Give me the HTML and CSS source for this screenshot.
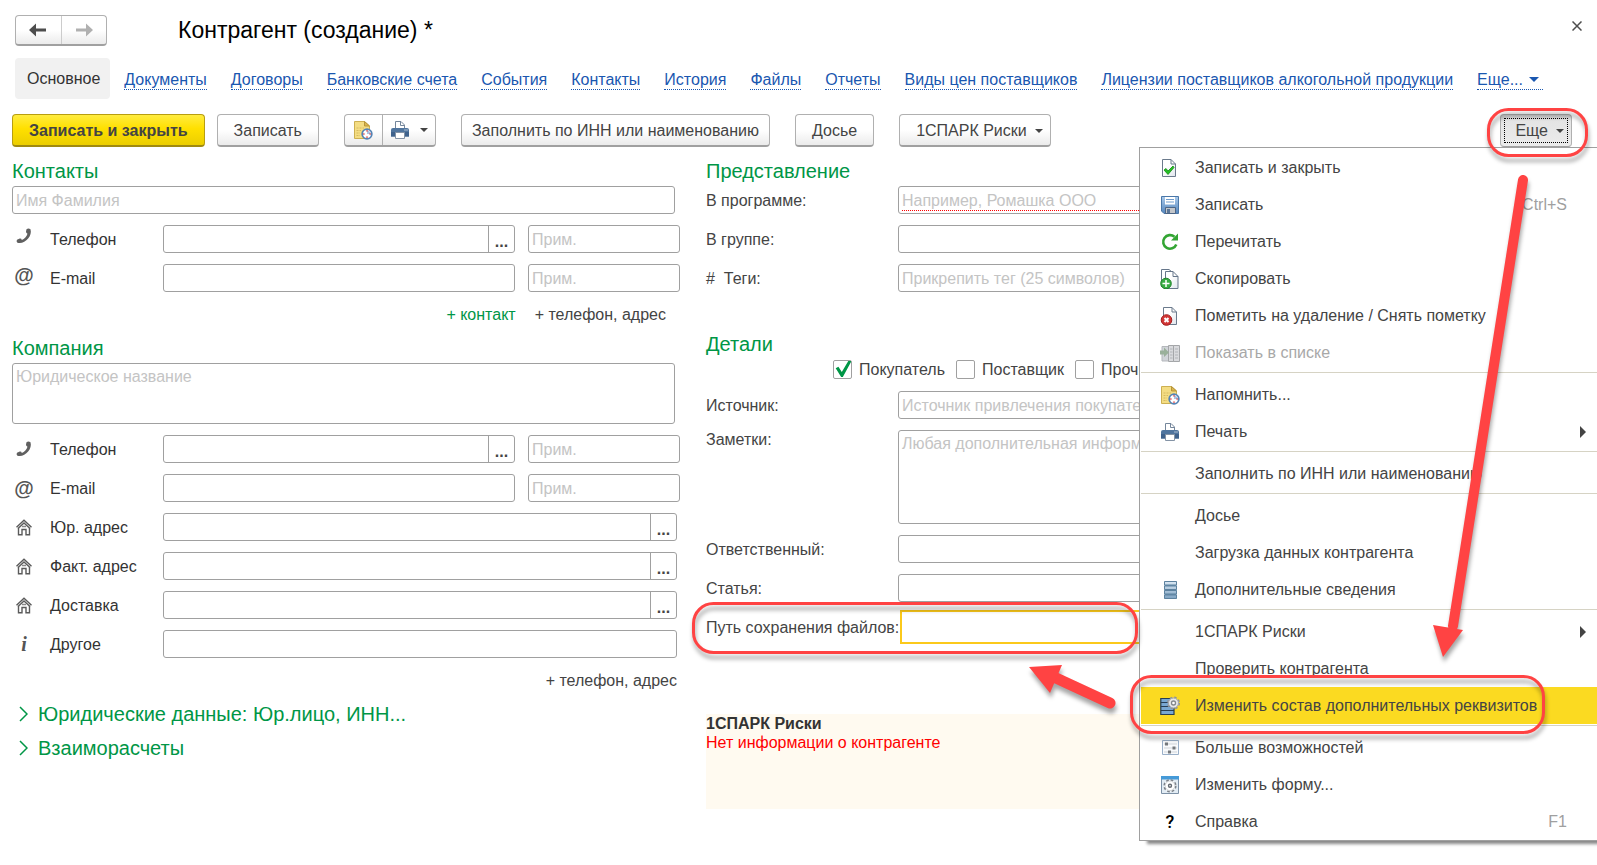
FILE: index.html
```html
<!DOCTYPE html>
<html lang="ru">
<head>
<meta charset="utf-8">
<title>Контрагент (создание)</title>
<link rel="stylesheet" href="styles.css">
</head>
<body>
<svg class="sprite" aria-hidden="true">
  <defs>
    <linearGradient id="g-blue" x1="0" y1="0" x2="0" y2="1"><stop offset="0" stop-color="#a9c9ea"/><stop offset="1" stop-color="#5586bd"/></linearGradient>
    <linearGradient id="g-bar" x1="0" y1="0" x2="0" y2="1"><stop offset="0" stop-color="#dbe8f4"/><stop offset="1" stop-color="#7fa3c2"/></linearGradient>
    <linearGradient id="g-page" x1="0" y1="0" x2="1" y2="1"><stop offset="0.4" stop-color="#ffffff"/><stop offset="1" stop-color="#dfe5ec"/></linearGradient>
  </defs>
  <symbol id="i-note" viewBox="0 0 20 20">
    <path d="M1.500 1.500H11.500L16.500 6V18.500H1.500Z" fill="#f4dd83" stroke="#cdb052"/>
    <path d="M11.500 1.500V6H16.500Z" fill="#d9b64f" stroke="#b8953a"/>
    <path d="M3.500 8H11M3.500 10.500H8M3.500 13H7M3.500 15.500H7" stroke="#d6bb60" stroke-dasharray="2 1"/>
    <circle cx="14" cy="14" r="4.800" fill="#fff" stroke="#5583b4" stroke-width="1.800"/>
    <path d="M14 14V10.500A3.500 3.500 0 0 1 17.500 14Z" fill="#a9c4e4"/>
    <path d="M14 10.300V11.500M14 16.500V17.700M10.300 14H11.500M16.500 14H17.700" stroke="#d33" stroke-width="1.500"/>
  </symbol>
  <symbol id="i-print" viewBox="0 0 20 20">
    <path d="M5.500 9V1.500H11L14.500 5V9" fill="#fff" stroke="#74869b"/>
    <path d="M10.500 1.500V5.500H14.500" fill="none" stroke="#74869b"/>
    <path d="M3 8H17Q19 8 19 10V16.500H1V10Q1 8 3 8Z" fill="#50759e"/>
    <path d="M1 12H19V16.500H1Z" fill="#3f628c"/>
    <path d="M14.500 10H15.500M16.500 10H17.500" stroke="#fff"/>
    <path d="M5.500 12.500H14.500V18.500H5.500Z" fill="#fff" stroke="#8493a5"/>
  </symbol>
  <symbol id="i-page-ok" viewBox="0 0 20 20">
    <path d="M2.500 1.500H11L15.500 6V18.500H2.500Z" fill="url(#g-page)" stroke="#6b7a8c"/>
    <path d="M11 1.500V6H15.500" fill="none" stroke="#6b7a8c"/>
    <path d="M4 12L6 10.500L8 13L13 8L14 9.500L8 16.500Z" fill="#24c024" stroke="#128a12" stroke-width=".8"/>
  </symbol>
  <symbol id="i-save" viewBox="0 0 20 20">
    <path d="M1.500 1.500H18.500V18.500H4L1.500 16Z" fill="url(#g-blue)" stroke="#4a77a8"/>
    <path d="M5 2H15V9.500H5Z" fill="#fff"/><path d="M6 4.500H14M6 7H14" stroke="#6e9ccd"/>
    <path d="M5.500 12.500H15.500V18.500H5.500Z" fill="#c3c6ca" stroke="#4c6585"/>
    <path d="M7 14H10V18H7Z" fill="#5a7698"/>
  </symbol>
  <symbol id="i-reload" viewBox="0 0 20 20">
    <path d="M16.300 12.500A6.800 6.800 0 1 1 14.500 4.800" fill="none" stroke="#33a533" stroke-width="2.600"/>
    <path d="M18 1.500V8.500H11Z" fill="#33a533"/>
  </symbol>
  <symbol id="i-copy" viewBox="0 0 20 20">
    <path d="M1.500 18V.5H9L12 3" fill="#fff" stroke="#66768a"/>
    <path d="M5.500 2.500H13L18 7.500V19.500H5.500Z" fill="url(#g-page)" stroke="#66768a"/>
    <path d="M13 2.500V7.500H18" fill="none" stroke="#66768a"/>
    <circle cx="6" cy="14.500" r="5.300" fill="#38ad44" stroke="#21812d"/>
    <path d="M6 11V18M2.500 14.500H9.500" stroke="#fff" stroke-width="1.500"/>
  </symbol>
  <symbol id="i-delete" viewBox="0 0 20 20">
    <path d="M3.500 1.500H12L16.500 6V18.500H3.500Z" fill="url(#g-page)" stroke="#6b7a8c"/>
    <path d="M12 1.500V6H16.500" fill="none" stroke="#6b7a8c"/>
    <circle cx="6.500" cy="14" r="5.300" fill="#d13636" stroke="#a51e1e"/>
    <path d="M4.500 12L8.500 16M8.500 12L4.500 16" stroke="#fff" stroke-width="2"/>
  </symbol>
  <symbol id="i-list" viewBox="0 0 20 20">
    <path d="M2 3.500H8.500V18H2Z" fill="#d1d4d9" stroke="#b4b7bb"/>
    <path d="M8.500 2.500H13.500V18.500H8.500ZM13.500 2.500H19.500V18.500H13.500Z" fill="#d9dadd" stroke="#a4a6a9"/>
    <path d="M10 6H12.500M10 9H12.500M10 12H12.500M10 15H12.500M15 6H18M15 9H18M15 12H18M15 15H18" stroke="#b1b4b8"/>
    <path d="M0 7.500H4V4.500L9 9.500L4 14V11.500H0Z" fill="#9ab09b"/>
  </symbol>
  <symbol id="i-stack" viewBox="0 0 20 20">
    <path d="M4.500 1.500H16.500V18.500H4.500Z" fill="#6e93b2"/>
    <path d="M4.500 1.500H16.500V5H4.500ZM4.500 6H16.500V9.500H4.500ZM4.500 10.500H16.500V14H4.500ZM4.500 15H16.500V18.500H4.500Z" fill="url(#g-bar)" stroke="#5d829f"/>
  </symbol>
  <symbol id="i-attrs" viewBox="0 0 20 20">
    <path d="M.8 2.500H14V18.500H.8Z" fill="#78a8d2" stroke="#263e54" stroke-width="1.200"/>
    <path d="M.8 6.500H14M.8 10.500H14M.8 14.500H14" stroke="#263e54" stroke-width="1.200"/>
    <circle cx="13.500" cy="7" r="5.500" fill="none" stroke="#909498" stroke-width="2" stroke-dasharray="2.400 1.920"/>
    <circle cx="13.500" cy="7" r="5" fill="#e6e7e8" stroke="#a4a7aa"/>
    <circle cx="13.500" cy="7" r="2" fill="#fff" stroke="#83878b" stroke-width="1.300"/>
  </symbol>
  <symbol id="i-sliders" viewBox="0 0 20 20">
    <path d="M2.500 2.500H18.500V16.500H2.500Z" fill="#f8fafc" stroke="#9ab0c9"/>
    <path d="M4 6H17M4 10H17M4 14H17" stroke="#cfd3d8"/>
    <path d="M5 4.500H8V7.500H5ZM12.500 8.500H15.500V11.500H12.500ZM8 12.500H11V15.500H8Z" fill="#74787c"/>
  </symbol>
  <symbol id="i-form" viewBox="0 0 20 20">
    <path d="M1.500 1.500H18.500V18.500H1.500Z" fill="#e2ecf4" stroke="#7d91a6"/>
    <path d="M1 1H19V4.500H1Z" fill="#459ad8"/>
    <circle cx="10" cy="10.800" r="5.800" fill="#fff" stroke="#7b8188" stroke-width="1.600" stroke-dasharray="2.600 1.955"/>
    <circle cx="10" cy="10.800" r="4.800" fill="#fff" stroke="#b4b8bc" stroke-width=".6"/>
    <circle cx="10" cy="10.800" r="1.500" fill="none" stroke="#666c73" stroke-width="1.400"/>
  </symbol>
  <symbol id="i-phone" viewBox="0 0 18 18">
    <path d="M11.500 2.200Q13.500 .8 15.500 2.300C17.800 9.500 9 18 2.400 15.700Q.9 14.300 2 12.700L4.700 11.600Q6.500 11.300 6.800 13C9.500 12 11.700 9.500 12.500 6.800Q10.800 6 11 4.500Z" fill="#606060"/>
  </symbol>
  <symbol id="i-home" viewBox="0 0 18 18">
    <path d="M1.500 9.200L9 2.200L16.500 9.200M3 10.500L9 5L15 10.500" fill="none" stroke="#5b5b5b" stroke-width="1.400"/>
    <path d="M3.500 10V16.800H7V11.500H11V16.800H14.500V10" fill="none" stroke="#5b5b5b" stroke-width="1.400"/>
    <path d="M7 8.500H11" stroke="#8a8a8a" stroke-width="1.500"/>
  </symbol>
</svg>

<main class="page">
  <header class="header">
    <div class="group nav">
      <button class="nav-btn" type="button" aria-label="Назад"><svg width="18" height="14" viewBox="0 0 18 14"><path d="M0 7L7 .5V5.500H17V8.500H7V13.500Z" fill="#4d4d4d"/></svg></button>
      <button class="nav-btn" type="button" aria-label="Вперед"><svg width="18" height="14" viewBox="0 0 18 14"><path d="M18 7L11 .5V5.500H1V8.500H11V13.500Z" fill="#b0b0b0"/></svg></button>
    </div>
    <h1 class="title">Контрагент (создание) *</h1>
    <button class="close" type="button" aria-label="Закрыть"><svg width="10" height="10" viewBox="0 0 10 10"><path d="M.5 .5L9.500 9.500M9.500 .5L.5 9.500" stroke="#4d4d4d" stroke-width="1.500"/></svg></button>
  </header>

  <nav class="tabs">
    <span class="tab-active">Основное</span>
    <a class="tab" href="#">Документы</a>
    <a class="tab" href="#">Договоры</a>
    <a class="tab" href="#">Банковские счета</a>
    <a class="tab" href="#">События</a>
    <a class="tab" href="#">Контакты</a>
    <a class="tab" href="#">История</a>
    <a class="tab" href="#">Файлы</a>
    <a class="tab" href="#">Отчеты</a>
    <a class="tab" href="#">Виды цен поставщиков</a>
    <a class="tab" href="#">Лицензии поставщиков алкогольной продукции</a>
    <a class="tab tab-more" href="#">Еще...<svg width="10" height="5" viewBox="0 0 10 5"><path d="M0 0H10L5 5Z" fill="#1a57b0"/></svg></a>
  </nav>

  <div class="toolbar">
    <button class="btn btn-primary" type="button">Записать и закрыть</button>
    <button class="btn" type="button">Записать</button>
    <div class="group icons">
      <button class="icon-btn" type="button" aria-label="Напомнить"><svg class="icon"><use href="#i-note"/></svg></button>
      <button class="icon-btn icon-btn-wide" type="button" aria-label="Печать"><svg class="icon"><use href="#i-print"/></svg><span class="caret"></span></button>
    </div>
    <button class="btn btn-fill spaced" type="button">Заполнить по ИНН или наименованию</button>
    <button class="btn spaced" type="button">Досье</button>
    <button class="btn btn-drop spaced" type="button">1СПАРК Риски<span class="caret"></span></button>
    <button class="btn btn-more" type="button"><span class="focus-box">Еще<span class="caret"></span></span></button>
  </div>

  <form class="columns">
    <div class="col-left">
      <h2 class="section">Контакты</h2>
      <input class="field full" type="text" placeholder="Имя Фамилия" aria-label="Имя Фамилия">
      <div class="row raised">
        <span class="mark"><svg class="glyph"><use href="#i-phone"/></svg></span>
        <label class="label" for="c-phone">Телефон</label>
        <div class="combo"><input id="c-phone" type="text"><button type="button" class="dots">...</button></div>
        <input class="field note" type="text" placeholder="Прим." aria-label="Примечание к телефону">
      </div>
      <div class="row raised">
        <span class="mark at">@</span>
        <label class="label" for="c-mail">E-mail</label>
        <input class="field" id="c-mail" type="text">
        <input class="field note" type="text" placeholder="Прим." aria-label="Примечание к почте">
      </div>
      <div class="adders adders-wide"><a class="add add-green" href="#">+ контакт</a><a class="add" href="#">+ телефон, адрес</a></div>

      <h2 class="section">Компания</h2>
      <textarea class="field area-name full" placeholder="Юридическое название" aria-label="Юридическое название"></textarea>
      <div class="row">
        <span class="mark"><svg class="glyph"><use href="#i-phone"/></svg></span>
        <label class="label" for="k-phone">Телефон</label>
        <div class="combo"><input id="k-phone" type="text"><button type="button" class="dots">...</button></div>
        <input class="field note" type="text" placeholder="Прим." aria-label="Примечание к телефону компании">
      </div>
      <div class="row">
        <span class="mark at">@</span>
        <label class="label" for="k-mail">E-mail</label>
        <input class="field" id="k-mail" type="text">
        <input class="field note" type="text" placeholder="Прим." aria-label="Примечание к почте компании">
      </div>
      <div class="row row-wide">
        <span class="mark"><svg class="glyph"><use href="#i-home"/></svg></span>
        <label class="label" for="k-legal">Юр. адрес</label>
        <div class="combo"><input id="k-legal" type="text"><button type="button" class="dots">...</button></div>
      </div>
      <div class="row row-wide">
        <span class="mark"><svg class="glyph"><use href="#i-home"/></svg></span>
        <label class="label" for="k-fact">Факт. адрес</label>
        <div class="combo"><input id="k-fact" type="text"><button type="button" class="dots">...</button></div>
      </div>
      <div class="row row-wide">
        <span class="mark"><svg class="glyph"><use href="#i-home"/></svg></span>
        <label class="label" for="k-ship">Доставка</label>
        <div class="combo"><input id="k-ship" type="text"><button type="button" class="dots">...</button></div>
      </div>
      <div class="row row-wide">
        <span class="mark info">i</span>
        <label class="label" for="k-other">Другое</label>
        <input class="field" id="k-other" type="text">
      </div>
      <div class="adders"><a class="add" href="#">+ телефон, адрес</a></div>

      <button class="expander" type="button"><svg width="9" height="16" viewBox="0 0 9 16"><path d="M1 1L8 8L1 15" fill="none" stroke="#009646" stroke-width="1.500"/></svg>Юридические данные: Юр.лицо, ИНН...</button>
      <button class="expander" type="button"><svg width="9" height="16" viewBox="0 0 9 16"><path d="M1 1L8 8L1 15" fill="none" stroke="#009646" stroke-width="1.500"/></svg>Взаиморасчеты</button>
    </div>

    <div class="col-right">
      <h2 class="section">Представление</h2>
      <div class="prop"><label for="p-name">В программе:</label><input class="field required" id="p-name" type="text" placeholder="Например, Ромашка ООО"></div>
      <div class="prop"><label for="p-group">В группе:</label><input class="field" id="p-group" type="text"></div>
      <div class="prop"><label for="p-tags">#&nbsp; Теги:</label><input class="field" id="p-tags" type="text" placeholder="Прикрепить тег (25 символов)"></div>

      <h2 class="section section-details">Детали</h2>
      <div class="checks">
        <label class="check"><input type="checkbox" checked>Покупатель</label>
        <label class="check"><input type="checkbox">Поставщик</label>
        <label class="check"><input type="checkbox">Прочие</label>
      </div>
      <div class="prop"><label for="p-source">Источник:</label><input class="field" id="p-source" type="text" placeholder="Источник привлечения покупателя"></div>
      <div class="prop prop-top"><label for="p-notes">Заметки:</label><textarea class="field area-notes" id="p-notes" placeholder="Любая дополнительная информация"></textarea></div>
      <div class="prop"><label for="p-owner">Ответственный:</label><input class="field" id="p-owner" type="text"></div>
      <div class="prop"><label for="p-item">Статья:</label><input class="field" id="p-item" type="text"></div>
      <div class="prop"><label for="p-path">Путь сохранения файлов:</label><input class="field focused" id="p-path" type="text"></div>

      <section class="spark">
        <strong class="spark-title">1СПАРК Риски</strong>
        <span class="spark-text">Нет информации о контрагенте</span>
      </section>
    </div>
  </form>

  <div class="menu" role="menu">
    <button class="item" type="button" role="menuitem"><svg class="icon"><use href="#i-page-ok"/></svg><span class="text">Записать и закрыть</span></button>
    <button class="item" type="button" role="menuitem"><svg class="icon"><use href="#i-save"/></svg><span class="text">Записать</span><span class="key">Ctrl+S</span></button>
    <button class="item" type="button" role="menuitem"><svg class="icon"><use href="#i-reload"/></svg><span class="text">Перечитать</span></button>
    <button class="item" type="button" role="menuitem"><svg class="icon"><use href="#i-copy"/></svg><span class="text">Скопировать</span></button>
    <button class="item" type="button" role="menuitem"><svg class="icon"><use href="#i-delete"/></svg><span class="text">Пометить на удаление / Снять пометку</span></button>
    <button class="item item-off" type="button" role="menuitem"><svg class="icon"><use href="#i-list"/></svg><span class="text">Показать в списке</span></button>
    <hr class="sep">
    <button class="item" type="button" role="menuitem"><svg class="icon"><use href="#i-note"/></svg><span class="text">Напомнить...</span></button>
    <button class="item" type="button" role="menuitem"><svg class="icon"><use href="#i-print"/></svg><span class="text">Печать</span><span class="sub"></span></button>
    <hr class="sep">
    <button class="item" type="button" role="menuitem"><span class="icon"></span><span class="text">Заполнить по ИНН или наименованию</span></button>
    <hr class="sep">
    <button class="item" type="button" role="menuitem"><span class="icon"></span><span class="text">Досье</span></button>
    <button class="item" type="button" role="menuitem"><span class="icon"></span><span class="text">Загрузка данных контрагента</span></button>
    <button class="item" type="button" role="menuitem"><svg class="icon"><use href="#i-stack"/></svg><span class="text">Дополнительные сведения</span></button>
    <hr class="sep">
    <button class="item" type="button" role="menuitem"><span class="icon"></span><span class="text">1СПАРК Риски</span><span class="sub"></span></button>
    <button class="item" type="button" role="menuitem"><span class="icon"></span><span class="text">Проверить контрагента</span></button>
    <button class="item item-on" type="button" role="menuitem"><svg class="icon"><use href="#i-attrs"/></svg><span class="text">Изменить состав дополнительных реквизитов</span></button>
    <hr class="sep">
    <button class="item" type="button" role="menuitem"><svg class="icon"><use href="#i-sliders"/></svg><span class="text">Больше возможностей</span></button>
    <button class="item" type="button" role="menuitem"><svg class="icon"><use href="#i-form"/></svg><span class="text">Изменить форму...</span></button>
    <button class="item" type="button" role="menuitem"><span class="icon help">?</span><span class="text">Справка</span><span class="key">F1</span></button>
  </div>

  <svg class="marks" width="920" height="760" viewBox="677 0 920 760" aria-hidden="true">
    <g class="callouts" fill="none" stroke="#ff4343" stroke-width="3">
      <rect x="1488.500" y="109.500" width="98" height="46" rx="20"/>
      <rect x="693.500" y="603.500" width="443" height="49" rx="20"/>
      <rect x="1131.500" y="676.500" width="412" height="56" rx="20"/>
    </g>
    <g class="arrows" fill="#ff4343" stroke="#ff4343">
      <path d="M1523 180L1453 626" stroke-width="10" stroke-linecap="round"/>
      <path d="M1433 625L1463 630L1443 657Z" stroke="none"/>
      <path d="M1110 703L1056 678" stroke-width="11" stroke-linecap="round"/>
      <path d="M1029 667L1062 665L1050 693Z" stroke="none"/>
    </g>
  </svg>
</main>
</body>
</html>
```
FILE: styles.css
```css
* {
  box-sizing: border-box;
}

body {
  margin: 0;
  background: #fff;
  color: #444;
  font: 16px/20px "Liberation Sans", Arial, sans-serif;
}

button,
input,
textarea {
  margin: 0;
  color: inherit;
  font: inherit;
}

button {
  padding: 0;
  border: 0;
  background: none;
}

.sprite {
  position: absolute;
  width: 0;
  height: 0;
}

.page {
  position: relative;
  min-height: 100vh;
  padding: 15px 12px;
  overflow: hidden;
}

.icon {
  flex: none;
  width: 20px;
  height: 20px;
}

.caret {
  border: 4px solid transparent;
  border-top-color: #444;
  border-bottom: 0;
}

/* Header */
.header {
  display: flex;
  align-items: center;
  padding: 0 3px;
}

.group {
  display: flex;
  border: 1px solid #b0b0b0;
  border-bottom: 2px solid #a0a0a0;
  border-radius: 4px;
  background: linear-gradient(#fff 50%, #ebebeb);
}

.nav {
  width: 92px;
  height: 31px;
}

.nav-btn {
  display: flex;
  flex: 1;
  align-items: center;
  justify-content: center;
}

.nav-btn + .nav-btn {
  border-left: 1px solid #ccc;
}

.title {
  flex: 1;
  margin: 0 0 0 71px;
  color: #000;
  font-size: 23px;
  font-weight: 400;
  line-height: 31px;
}

.close {
  display: flex;
  align-self: flex-start;
  padding: 6px 0;
}

/* Tabs */
.tabs {
  display: flex;
  align-items: center;
  gap: 24px;
  margin: 12px 0 15px 3px;
  white-space: nowrap;
}

.tab-active {
  margin-right: -10px;
  padding: 1px 10px 0 12px;
  border-radius: 4px;
  background: #f1f1f1;
  color: #333;
  line-height: 40px;
}

.tab {
  margin-top: 3px;
  border-bottom: 1px dotted #1a57b0;
  color: #1a57b0;
  line-height: 18px;
  text-decoration: none;
}

.tab-more {
  display: flex;
  align-items: center;
  gap: 6px;
  padding-right: 4px;
}

/* Toolbar */
.toolbar {
  display: flex;
  height: 33px;
}

.btn {
  padding: 2px 16px 0;
  border: 1px solid #b0b0b0;
  border-bottom: 2px solid #a0a0a0;
  border-radius: 4px;
  background: linear-gradient(#fff 50%, #ebebeb);
  white-space: nowrap;
}

.btn-primary {
  margin-right: 12px;
  border-color: #b89e10;
  border-bottom-color: #a08a10;
  background: linear-gradient(#ffec40, #ffe000 45%, #ecce00);
  font-weight: 700;
}

.btn-fill {
  padding: 2px 10px 0;
}

.icons {
  margin-left: 25px;
}

.icon-btn {
  display: flex;
  align-items: center;
  justify-content: center;
  width: 37px;
}

.icon-btn-wide {
  gap: 10px;
  width: 53px;
  border-left: 1px solid #b0b0b0;
}

.spaced {
  margin-left: 25px;
}

.btn-drop {
  display: flex;
  align-items: center;
  gap: 8px;
  padding-right: 7px;
}

.btn-more {
  width: 72px;
  margin: 0 13px 0 auto;
  padding: 3px;
  border-bottom-width: 1px;
  background: linear-gradient(#d0d0d0, #e4e4e4 20%, #ececec);
}

.focus-box {
  display: flex;
  align-items: center;
  justify-content: flex-end;
  gap: 8px;
  height: 25px;
  padding-right: 3px;
  border: 1px dotted #000;
}

/* Form */
.columns {
  display: grid;
  grid-template-columns: minmax(0, 668fr) minmax(0, 879fr);
  gap: 26px;
  padding-top: 12px;
}

.section {
  margin: 0 0 3px;
  color: #009646;
  font-size: 20px;
  font-weight: 400;
  line-height: 24px;
}

.field,
.combo {
  display: block;
  flex: 1;
  min-width: 0;
  height: 28px;
  border: 1px solid #a0a0a0;
  border-radius: 3px;
  background: #fff;
}

.field {
  padding: 2px 3px 0;
}

.field::placeholder {
  color: #c4c4c4;
  opacity: 1;
}

.full {
  width: calc(100% - 5px);
  margin-bottom: 11px;
}

textarea.field {
  padding: 3px;
  resize: none;
}

.area-name {
  height: 61px;
}

.row {
  display: flex;
  align-items: center;
  margin-bottom: 11px;
}

.row-wide {
  padding-right: 3px;
}

.mark {
  display: flex;
  justify-content: center;
  width: 24px;
  height: 18px;
  color: #555;
  line-height: 18px;
}

.raised .mark {
  align-self: flex-start;
  margin-top: 2px;
}

.glyph {
  width: 18px;
  height: 18px;
}

.at {
  font-size: 20px;
  font-weight: 700;
}

.info {
  font: italic 700 20px/18px "Liberation Serif", serif;
}

.label {
  width: 113px;
  margin-left: 14px;
  padding-top: 2px;
  color: #333;
}

.combo {
  display: flex;
}

.combo input {
  flex: 1;
  min-width: 0;
  padding: 0 3px;
  border: 0;
  background: none;
}

.dots {
  width: 26px;
  padding-top: 6px;
  border-left: 1px solid #a0a0a0;
  font-weight: 700;
}

.note {
  flex: none;
  width: 152px;
  margin-left: 13px;
}

.adders {
  display: flex;
  justify-content: flex-end;
  gap: 19px;
  margin: 13px 3px 11px 0;
}

.adders-wide {
  margin-right: 14px;
}

.add {
  color: #444;
  text-decoration: none;
}

.add-green {
  color: #009646;
}

.expander {
  display: flex;
  align-items: center;
  gap: 10px;
  margin: 0 0 10px 7px;
  color: #009646;
  font-size: 20px;
  line-height: 24px;
}

.prop {
  display: flex;
  align-items: center;
  margin-bottom: 11px;
}

.prop label {
  flex: none;
  min-width: 192px;
  padding: 2px 4px 0 0;
  white-space: nowrap;
}

.prop-top {
  align-items: flex-start;
}

.prop-top label {
  padding-top: 0;
}

.required {
  background: repeating-linear-gradient(90deg, #f00 0 1px, #fff 1px 2px) 3px 23px / 100% 1px no-repeat;
}

.focused {
  border-color: transparent;
  border-radius: 0;
  outline: 2px solid #fbc91b;
  outline-offset: 1px;
}

.section-details {
  margin: 40px 0 4px;
}

.area-notes {
  height: 94px;
}

.checks {
  display: flex;
  gap: 11px;
  margin: 0 0 12px 127px;
}

.check {
  display: flex;
  align-items: center;
  gap: 7px;
  height: 19px;
}

.check input {
  width: 19px;
  height: 19px;
  border: 1px solid #a0a0a0;
  border-radius: 2px;
  background: #fff;
  appearance: none;
}

.check input:checked::before {
  content: "";
  display: block;
  width: 17px;
  height: 17px;
  background: #009646;
  clip-path: polygon(10% 42%, 26% 34%, 46% 64%, 84% 0, 100% 0, 100% 6%, 52% 94%, 42% 94%);
}

.spark {
  display: flex;
  flex-direction: column;
  height: 95px;
  margin-top: 73px;
  background: #fffaf0;
  line-height: 19px;
}

.spark-title {
  color: #333;
}

.spark-text {
  color: #f00;
}

/* Drop-down menu */
.menu {
  position: absolute;
  top: 147px;
  right: 0;
  width: 458px;
  padding: 1px 0 0 1px;
  border: solid #a0a0a0;
  border-width: 1px 0 1px 1px;
  background: #fff;
  box-shadow: 7px 4px 3px -1px #888;
}

.item {
  display: flex;
  align-items: center;
  width: 100%;
  height: 37px;
  padding: 0 11px 0 19px;
  text-align: left;
  white-space: nowrap;
}

.text {
  flex: 1;
  padding-left: 15px;
}

.key {
  padding-right: 19px;
  color: #a0a0a0;
}

.sub {
  border: 6px solid transparent;
  border-left-color: #444;
  border-right: 0;
}

.item-off {
  color: #a8a8a8;
}

.item-on {
  background: #fbda21;
}

.help {
  color: #000;
  font: 500 18px/20px Roboto, sans-serif;
  text-align: center;
}

.sep {
  height: 5px;
  margin: 0;
  border: 0;
  background: linear-gradient(#d6d3c4, #d6d3c4) 0 1px / 100% 1px no-repeat;
}

/* Callouts and arrows over the form */
.marks {
  position: absolute;
  top: 0;
  right: 0;
  pointer-events: none;
}

.callouts,
.arrows {
  filter: drop-shadow(1px 5px 2px rgba(0, 0, 0, .35));
}
```
